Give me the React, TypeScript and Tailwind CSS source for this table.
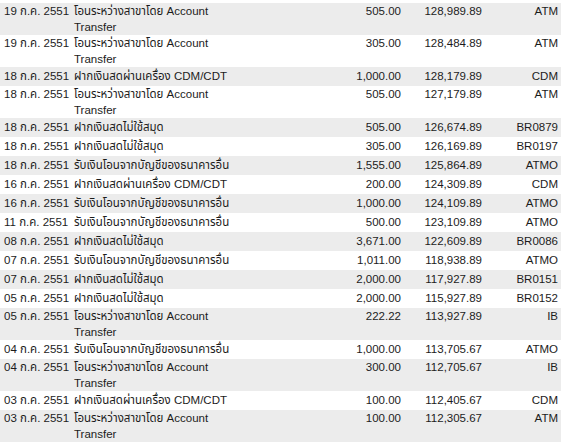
import React from "react";

type Row = { d: string; desc: string; desc2?: string; amt: string; bal: string; ch: string };

const rows: Row[] = [
  { d: "19 ก.ค. 2551", desc: "โอนระหว่างสาขาโดย Account", desc2: "Transfer", amt: "505.00", bal: "128,989.89", ch: "ATM" },
  { d: "19 ก.ค. 2551", desc: "โอนระหว่างสาขาโดย Account", desc2: "Transfer", amt: "305.00", bal: "128,484.89", ch: "ATM" },
  { d: "18 ก.ค. 2551", desc: "ฝากเงินสดผ่านเครื่อง CDM/CDT", amt: "1,000.00", bal: "128,179.89", ch: "CDM" },
  { d: "18 ก.ค. 2551", desc: "โอนระหว่างสาขาโดย Account", desc2: "Transfer", amt: "505.00", bal: "127,179.89", ch: "ATM" },
  { d: "18 ก.ค. 2551", desc: "ฝากเงินสดไม่ใช้สมุด", amt: "505.00", bal: "126,674.89", ch: "BR0879" },
  { d: "18 ก.ค. 2551", desc: "ฝากเงินสดไม่ใช้สมุด", amt: "305.00", bal: "126,169.89", ch: "BR0197" },
  { d: "18 ก.ค. 2551", desc: "รับเงินโอนจากบัญชีของธนาคารอื่น", amt: "1,555.00", bal: "125,864.89", ch: "ATMO" },
  { d: "16 ก.ค. 2551", desc: "ฝากเงินสดผ่านเครื่อง CDM/CDT", amt: "200.00", bal: "124,309.89", ch: "CDM" },
  { d: "16 ก.ค. 2551", desc: "รับเงินโอนจากบัญชีของธนาคารอื่น", amt: "1,000.00", bal: "124,109.89", ch: "ATMO" },
  { d: "11 ก.ค. 2551", desc: "รับเงินโอนจากบัญชีของธนาคารอื่น", amt: "500.00", bal: "123,109.89", ch: "ATMO" },
  { d: "08 ก.ค. 2551", desc: "ฝากเงินสดไม่ใช้สมุด", amt: "3,671.00", bal: "122,609.89", ch: "BR0086" },
  { d: "07 ก.ค. 2551", desc: "รับเงินโอนจากบัญชีของธนาคารอื่น", amt: "1,011.00", bal: "118,938.89", ch: "ATMO" },
  { d: "07 ก.ค. 2551", desc: "ฝากเงินสดไม่ใช้สมุด", amt: "2,000.00", bal: "117,927.89", ch: "BR0151" },
  { d: "05 ก.ค. 2551", desc: "ฝากเงินสดไม่ใช้สมุด", amt: "2,000.00", bal: "115,927.89", ch: "BR0152" },
  { d: "05 ก.ค. 2551", desc: "โอนระหว่างสาขาโดย Account", desc2: "Transfer", amt: "222.22", bal: "113,927.89", ch: "IB" },
  { d: "04 ก.ค. 2551", desc: "รับเงินโอนจากบัญชีของธนาคารอื่น", amt: "1,000.00", bal: "113,705.67", ch: "ATMO" },
  { d: "04 ก.ค. 2551", desc: "โอนระหว่างสาขาโดย Account", desc2: "Transfer", amt: "300.00", bal: "112,705.67", ch: "IB" },
  { d: "03 ก.ค. 2551", desc: "ฝากเงินสดผ่านเครื่อง CDM/CDT", amt: "100.00", bal: "112,405.67", ch: "CDM" },
  { d: "03 ก.ค. 2551", desc: "โอนระหว่างสาขาโดย Account", desc2: "Transfer", amt: "100.00", bal: "112,305.67", ch: "ATM" },
];

export default function App() {
  return (
    <div
      className="w-[567px] h-[442px] overflow-hidden bg-white pt-[3px] text-[11.5px] leading-[16px] text-[#1c1c1c]"
      style={{ fontFamily: '"Liberation Sans", "Noto Sans Thai", "Noto Sans", sans-serif' }}
    >
      <div className="w-[561px] flex flex-col">
        {rows.map((r, i) => (
          <div
            key={i}
            className={`grid grid-cols-[70px_170px_165px_81px_75px] ${r.desc2 ? "h-[32px] pt-0" : "h-[19px] pt-[1px]"} ${i % 2 === 0 ? "bg-[#ececec]" : "bg-white"}`}
          >
            <div className="pl-[4px] whitespace-nowrap">{r.d}</div>
            <div className="pl-[4px] whitespace-nowrap">
              <div>{r.desc}</div>
              {r.desc2 && <div>{r.desc2}</div>}
            </div>
            <div className="pr-[4px] text-right">{r.amt}</div>
            <div className="pr-[4px] text-right">{r.bal}</div>
            <div className="pr-[3px] text-right">{r.ch}</div>
          </div>
        ))}
      </div>
    </div>
  );
}
